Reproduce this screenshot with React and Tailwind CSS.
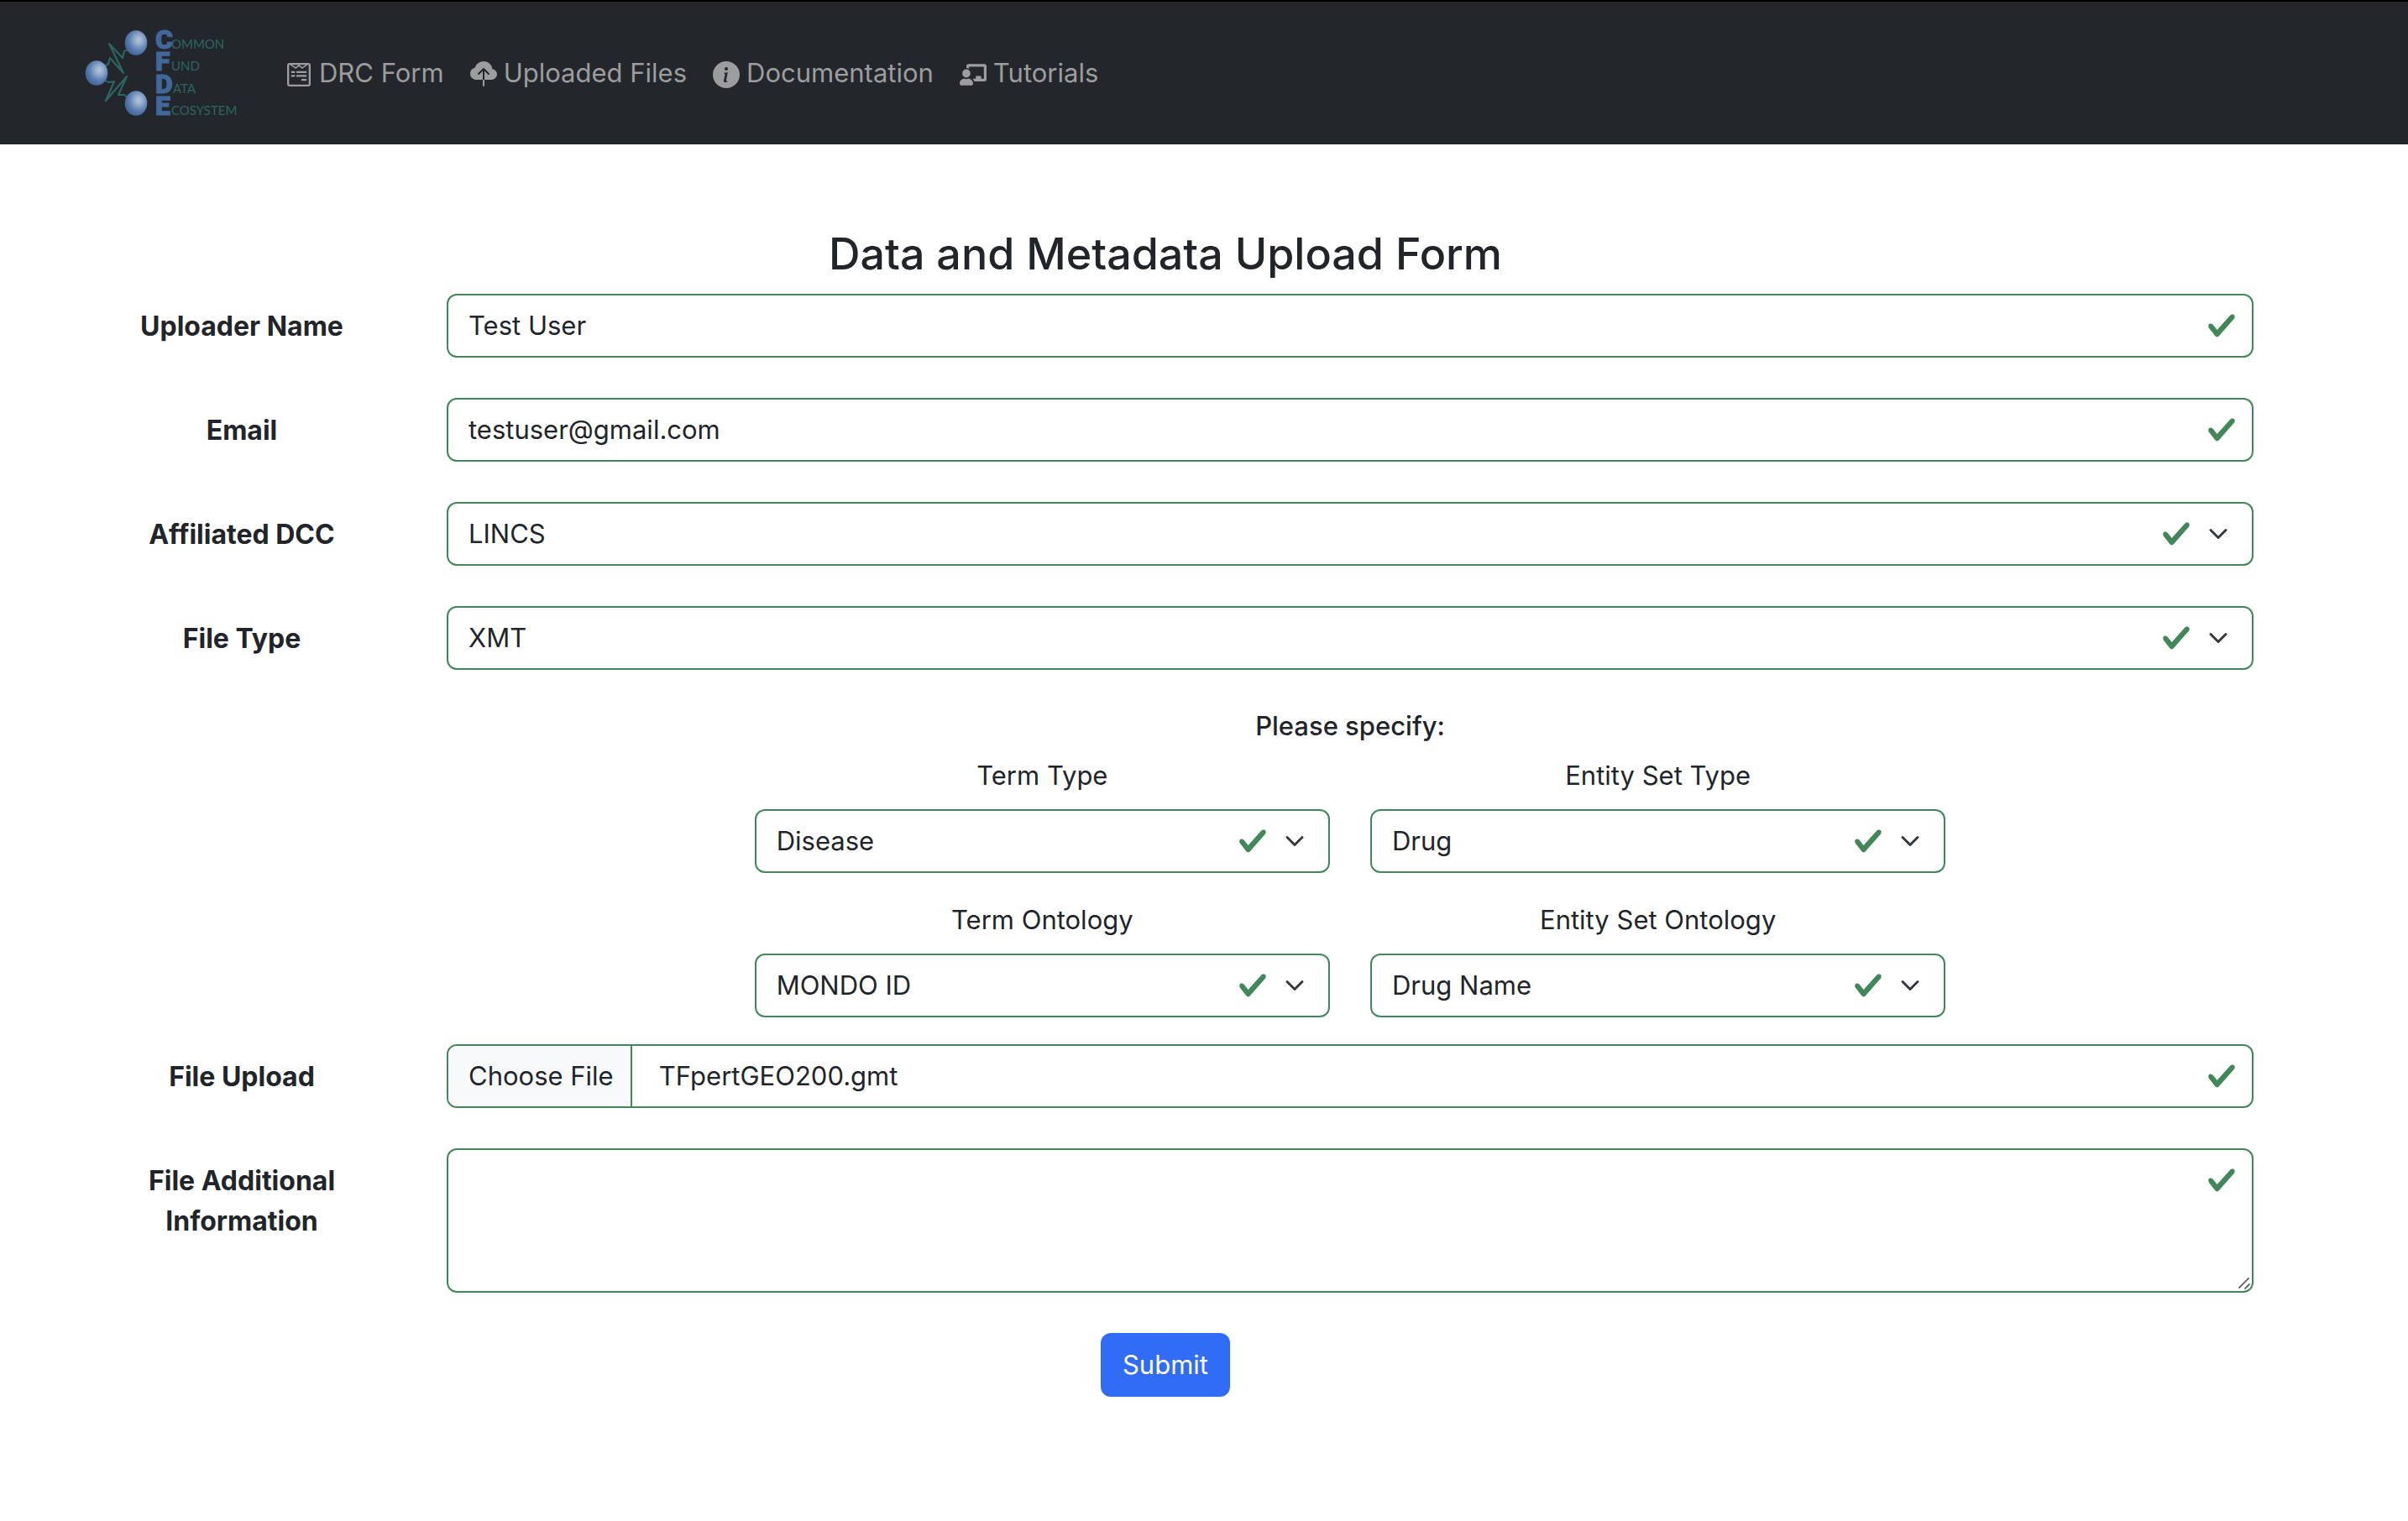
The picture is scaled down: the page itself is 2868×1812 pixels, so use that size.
import { useEffect, useRef } from "react";
import { BsCloudUploadFill, BsInfoCircleFill } from "react-icons/bs";
import { FaChalkboardTeacher, FaWpforms } from "react-icons/fa";

const CONTROL =
  "block w-full rounded-xl border-2 border-[#428759] bg-white text-[31px] leading-[48px] text-[#212529] outline-none";

const NAV_LINKS = [
  { label: "DRC Form", Icon: FaWpforms },
  { label: "Uploaded Files", Icon: BsCloudUploadFill },
  { label: "Documentation", Icon: BsInfoCircleFill },
  { label: "Tutorials", Icon: FaChalkboardTeacher },
];

function Logo() {
  const spheres = [
    [162, 50],
    [115, 86],
    [162, 122],
  ];
  const rows = [
    { initial: "C", rest: "OMMON", y: 57, x: 204 },
    { initial: "F", rest: "UND", y: 83, x: 204 },
    { initial: "D", rest: "ATA", y: 110, x: 206 },
    { initial: "E", rest: "COSYSTEM", y: 136, x: 204 },
  ];
  return (
    <svg
      viewBox="100 30 184 112"
      className="h-28 w-46 overflow-visible"
      role="img"
      aria-label="Common Fund Data Ecosystem"
    >
      <defs>
        <radialGradient id="sphere" cx="0.62" cy="0.38" r="0.6">
          <stop offset="0" stopColor="#b3c4d9" />
          <stop offset="0.25" stopColor="#9db2cf" />
          <stop offset="0.7" stopColor="#5c80b0" />
          <stop offset="1" stopColor="#44699f" />
        </radialGradient>
      </defs>
      <g fill="none" stroke="#2c6562" strokeWidth="2.2" strokeLinejoin="round">
        <path d="M125 78l4-3 2-7 16 18-17-35 16 17 2-8 5-2" />
        <path d="M125 95l5 2 6-1-10 23 25-29-10 22 7 0 5 4" />
      </g>
      {spheres.map(([cx, cy]) => (
        <ellipse key={cy} cx={cx} cy={cy} rx="13.3" ry="14.8" fill="url(#sphere)" />
      ))}
      {rows.map((r) => (
        <g key={r.initial}>
          <text
            x="185"
            y={r.y}
            fontFamily="Roboto, sans-serif"
            fontSize="32"
            fontWeight="900"
            fill="#41679b"
            stroke="#41679b"
            strokeWidth="1"
          >
            {r.initial}
          </text>
          <text x={r.x} y={r.y} fontFamily="Lato, sans-serif" fontSize="15" fill="#2c6562">
            {r.rest}
          </text>
        </g>
      ))}
    </svg>
  );
}

function Check({ className }) {
  return (
    <svg viewBox="0 0 8 8" className={`pointer-events-none absolute size-9 ${className}`} aria-hidden="true">
      <path
        fill="#428759"
        d="M2.3 6.73.6 4.53c-.4-1.04.46-1.4 1.1-.8l1.1 1.4 3.4-3.8c.6-.63 1.6-.27 1.2.7l-4 4.6c-.43.5-.8.4-1.1.1z"
      />
    </svg>
  );
}

function TextField({ id, type = "text", value }) {
  return (
    <div className="relative">
      <input id={id} type={type} defaultValue={value} className={`${CONTROL} py-3 pr-18 pl-6`} />
      <Check className="top-5 right-5" />
    </div>
  );
}

function SelectField({ id, value }) {
  return (
    <div className="relative">
      <select id={id} defaultValue={value} className={`${CONTROL} appearance-none py-3 pr-32 pl-6`}>
        <option>{value}</option>
      </select>
      <Check className="top-5 right-[74px]" />
      <svg viewBox="0 0 16 16" className="pointer-events-none absolute top-[26px] right-[30px] size-6" aria-hidden="true">
        <path fill="none" stroke="#343a40" strokeLinecap="round" strokeLinejoin="round" strokeWidth="2" d="m2 5 6 6 6-6" />
      </svg>
    </div>
  );
}

function FileField({ id, fileName }) {
  const ref = useRef(null);
  useEffect(() => {
    const transfer = new DataTransfer();
    transfer.items.add(new File([""], fileName));
    ref.current.files = transfer.files;
  }, [fileName]);
  return (
    <div className="relative">
      <input
        ref={ref}
        id={id}
        type="file"
        className={`${CONTROL} overflow-hidden file:mr-8 file:h-18 file:border-0 file:border-r-2 file:border-solid file:border-[#428759] file:bg-[#f8f9fb] file:pr-5 file:pl-6 file:text-[#212529]`}
      />
      <Check className="top-5 right-5" />
    </div>
  );
}

function NotesField({ id }) {
  return (
    <div className="relative">
      <textarea id={id} className={`${CONTROL} h-43 resize-none py-3 pr-18 pl-6`} />
      <Check className="top-5 right-5" />
      <svg viewBox="0 0 16 16" className="pointer-events-none absolute right-[3px] bottom-[3px] size-4" aria-hidden="true">
        <path d="M2 13 13 2M9 14l5-5" stroke="#666" strokeWidth="1.8" strokeLinecap="round" />
      </svg>
    </div>
  );
}

function Row({ id, label, children }) {
  return (
    <div className="mb-12 grid grid-cols-12">
      <label htmlFor={id} className="col-span-2 px-6 pt-[15px] pb-3 text-center text-[32px] leading-[48px] font-bold">
        {label}
      </label>
      <div className="col-span-10 px-6">{children}</div>
    </div>
  );
}

function SpecifyField({ id, label, value, className }) {
  return (
    <div className={`col-span-2 mb-8 px-6 ${className}`}>
      <label htmlFor={id} className="mb-4 block text-center">
        {label}
      </label>
      <SelectField id={id} value={value} />
    </div>
  );
}

export default function App() {
  return (
    <div className="min-h-screen bg-white font-['Inter',sans-serif] text-[31px] leading-[48px] text-[#212529]">
      <header className="flex h-43 items-center border-t-2 border-black bg-[#23272b] pl-[100px]">
        <a href="#home">
          <Logo />
        </a>
        <nav className="ml-14 flex items-center gap-[31px] text-[#9b9d9e]">
          {NAV_LINKS.map(({ label, Icon }) => (
            <a key={label} href="#nav" className="flex items-center gap-2 whitespace-nowrap">
              <Icon className="mt-1 size-8" aria-hidden="true" />
              {label}
            </a>
          ))}
        </nav>
      </header>

      <main className="pt-24 pr-40 pl-[68px]">
        <h1 className="mb-3 text-center text-[52px] leading-[70px] font-medium">Data and Metadata Upload Form</h1>
        <form onSubmit={(e) => e.preventDefault()}>
          <Row id="name" label="Uploader Name">
            <TextField id="name" value="Test User" />
          </Row>
          <Row id="email" label="Email">
            <TextField id="email" type="email" value="testuser@gmail.com" />
          </Row>
          <Row id="dcc" label="Affiliated DCC">
            <SelectField id="dcc" value="LINCS" />
          </Row>
          <Row id="type" label="File Type">
            <SelectField id="type" value="XMT" />
          </Row>

          <div className="grid grid-cols-12">
            <fieldset className="col-span-10 col-start-3">
              <legend className="mb-4 w-full text-center leading-[38px] font-medium">Please specify:</legend>
              <div className="grid grid-cols-6">
                <SpecifyField className="col-start-2" id="term-type" label="Term Type" value="Disease" />
                <SpecifyField className="col-start-4" id="set-type" label="Entity Set Type" value="Drug" />
                <SpecifyField className="col-start-2" id="term-ontology" label="Term Ontology" value="MONDO ID" />
                <SpecifyField className="col-start-4" id="set-ontology" label="Entity Set Ontology" value="Drug Name" />
              </div>
            </fieldset>
          </div>

          <Row id="file" label="File Upload">
            <FileField id="file" fileName="TFpertGEO200.gmt" />
          </Row>
          <Row id="notes" label="File Additional Information">
            <NotesField id="notes" />
          </Row>

          <div className="flex justify-center">
            <button type="submit" className="rounded-xl bg-[#306cf5] px-[26px] py-[14px] text-white">
              Submit
            </button>
          </div>
        </form>
      </main>
    </div>
  );
}
